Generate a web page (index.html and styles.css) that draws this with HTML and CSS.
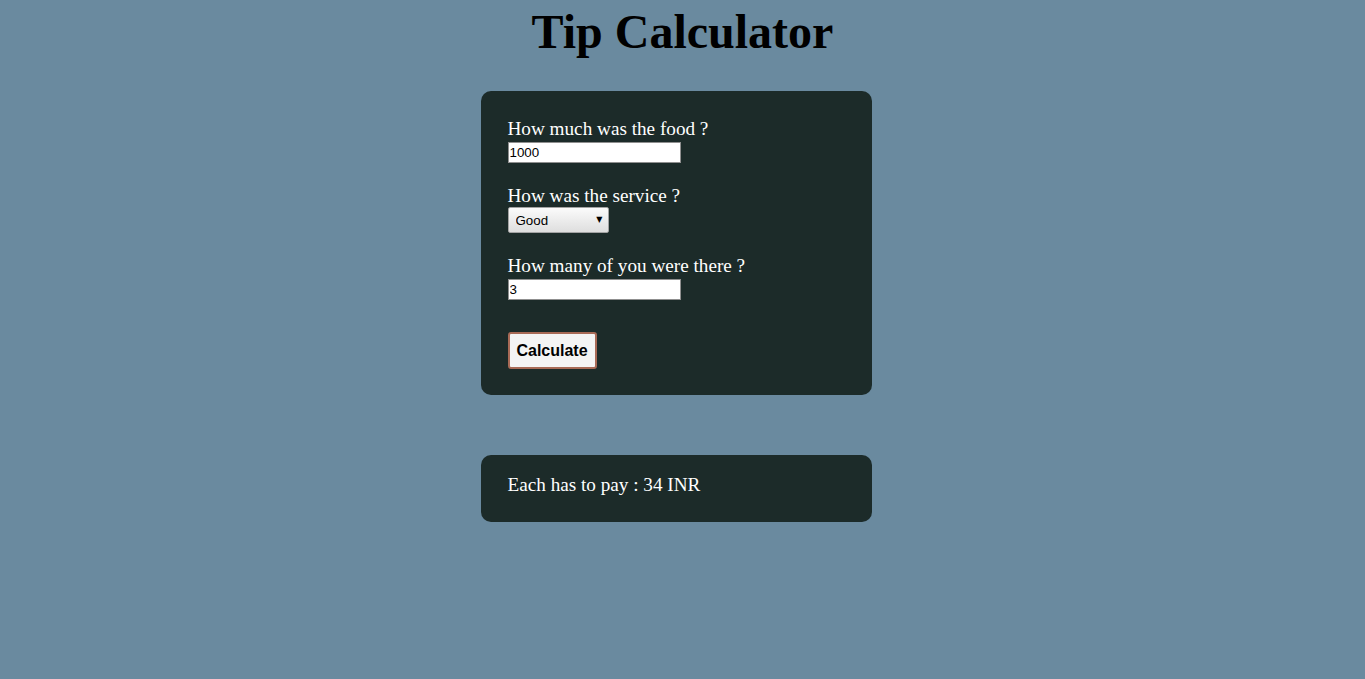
FILE: index.html
```html
<!DOCTYPE html>
<html lang="en">
<head>
<meta charset="utf-8">
<title>Tip Calculator</title>
<link rel="stylesheet" href="styles.css">
</head>
<body>
<h1 class="title">Tip Calculator</h1>
<div class="card form-card">
  <div class="field">
    <label class="label" for="bill">How much was the food ?</label>
    <input class="text-input" id="bill" type="text" value="1000">
  </div>
  <div class="field">
    <label class="label" for="service">How was the service ?</label>
    <span class="select-wrap">
      <select class="select" id="service">
        <option>Good</option>
      </select>
      <span class="select-arrow">&#9660;</span>
    </span>
  </div>
  <div class="field">
    <label class="label" for="people">How many of you were there ?</label>
    <input class="text-input" id="people" type="text" value="3">
  </div>
  <button class="btn" type="button">Calculate</button>
</div>
<div class="card result-card">
  <p class="result">Each has to pay : 34 INR</p>
</div>
</body>
</html>
```

FILE: styles.css
```css
html, body {
  margin: 0;
  padding: 0;
}
body {
  background: #6a8a9f;
  font-family: "Liberation Serif", "Times New Roman", serif;
  color: #ffffff;
  min-height: 679px;
}
.title {
  margin: 4px 0 0;
  text-align: center;
  font-size: 48px;
  font-weight: bold;
  color: #000;
  line-height: 55px;
}
.card {
  box-sizing: border-box;
  width: 391px;
  margin-left: calc(50% - 202px);
  background: #1c2b29;
  border-radius: 10px;
}
.form-card {
  margin-top: 32px;
  padding: 26px 27px 26px;
  height: 304px;
}
.field {
  display: flex;
  flex-direction: column;
  align-items: flex-start;
  margin-bottom: 21px;
}
.label {
  font-size: 19.2px;
  line-height: 23px;
  margin-bottom: 2px;
}
.text-input {
  box-sizing: border-box;
  width: 173px;
  height: 21px;
  border: 1px solid #8f8f8f;
  padding: 1px 1px;
  margin: 0;
  font-family: "Liberation Sans", Arial, sans-serif;
  font-size: 13.33px;
  color: #000;
  background: #fff;
  outline: none;
}
.select-wrap {
  position: relative;
  display: flex;
  margin-top: -2px;
}
.select {
  -webkit-appearance: none;
  appearance: none;
  box-sizing: border-box;
  width: 101px;
  height: 26px;
  border: 1px solid #a3a3a3;
  border-radius: 2px;
  padding: 0 0 0 7px;
  margin: 0;
  background: linear-gradient(#fbfbfb, #dedede);
  font-family: "Liberation Sans", Arial, sans-serif;
  font-size: 13.33px;
  color: #000;
}
.select-arrow {
  position: absolute;
  right: 6px;
  top: 8px;
  font-family: "DejaVu Sans", sans-serif;
  font-size: 8px;
  color: #000;
  pointer-events: none;
}
.btn {
  box-sizing: border-box;
  margin-top: 11px;
  width: 89px;
  height: 37px;
  padding: 0;
  border: 2px solid #a86a56;
  border-radius: 3px;
  background: #f4f4f4;
  font-family: "Liberation Sans", Arial, sans-serif;
  font-weight: bold;
  font-size: 16px;
  color: #000;
}
.result-card {
  margin-top: 60px;
  height: 67px;
  padding: 18px 27px 0;
}
.result {
  margin: 0;
  font-size: 19.2px;
  line-height: 23px;
}
```
